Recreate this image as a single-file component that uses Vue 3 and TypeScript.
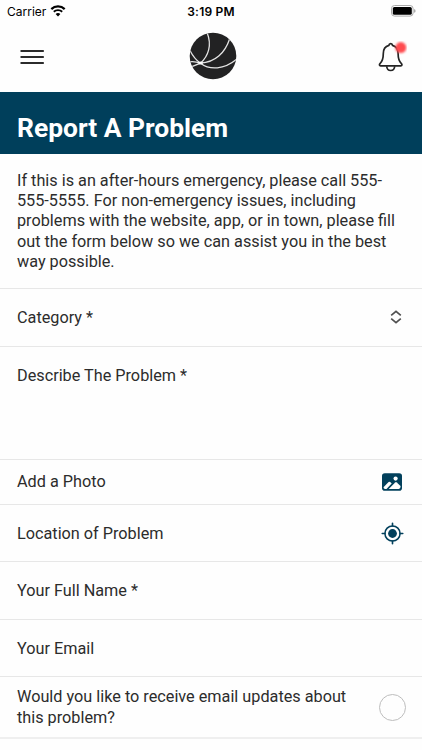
<script setup lang="ts">
interface Field {
  id: string
  label: string
  icon?: 'select' | 'photo' | 'locate' | 'radio'
}

const fields: Field[] = [
  { id: 'category', label: 'Category *', icon: 'select' },
  { id: 'description', label: 'Describe The Problem *' },
  { id: 'photo', label: 'Add a Photo', icon: 'photo' },
  { id: 'location', label: 'Location of Problem', icon: 'locate' },
  { id: 'name', label: 'Your Full Name *' },
  { id: 'email', label: 'Your Email' },
  { id: 'updates', label: 'Would you like to receive email updates about this problem?', icon: 'radio' },
]
</script>

<template>
  <div class="screen">
    <div class="status">
      <div class="carrier">
        <span>Carrier</span>
        <svg width="16" height="12" viewBox="0 0 16 12">
          <path d="M1.3 4.1a9.7 9.7 0 0 1 13.4 0" fill="none" stroke="#000" stroke-width="2.2" />
          <path d="M3.8 6.8a6 6 0 0 1 8.4 0" fill="none" stroke="#000" stroke-width="1.9" />
          <path d="M8 11.6 5.6 9.1a3.4 3.4 0 0 1 4.8 0z" />
        </svg>
      </div>
      <div class="clock">3:19 PM</div>
      <div class="battery">
        <svg width="25" height="12" viewBox="0 0 25 12">
          <rect x=".5" y=".5" width="21.6" height="10.6" rx="3" fill="none" stroke="#aaa" />
          <rect x="1.8" y="1.9" width="19" height="7.9" rx="1.6" />
          <path d="M23.2 4v3.8q1.3-.5 1.3-1.9T23.2 4z" fill="#999" />
        </svg>
      </div>
    </div>

    <header class="bar">
      <svg class="menu" width="24" height="16" viewBox="0 0 24 16">
        <path d="M1.2 2h22M1.2 8h22M1.2 14h22" stroke="#2b2b2b" stroke-width="1.8" stroke-linecap="round" />
      </svg>
      <svg class="logo" width="48" height="48" viewBox="0 0 48 48">
        <defs>
          <clipPath id="disc"><circle cx="24" cy="24" r="23.3" /></clipPath>
        </defs>
        <circle cx="24" cy="24" r="23.3" fill="#222223" />
        <g clip-path="url(#disc)" fill="none" stroke="#e4e4e4" stroke-width="1.3">
          <path d="M18.2 1.1C23 13 19.5 24 11.5 31.2" />
          <path d="M40.6 7C36 21 26 30.5 11.5 31.2" />
          <path d="M47.3 27.5C35 37.5 21 38.5 11.5 31.2" />
          <path d="M1 18.5C4 24.5 7.5 28.5 11.5 31.2" />
          <path d="M0 29.8Q6 29 11.5 31.2Q7 33 2.8 34.7" />
        </g>
        <ellipse cx="11.6" cy="31" rx="2.4" ry="1.5" fill="#fff" />
      </svg>
      <svg class="bell" width="30" height="32" viewBox="0 0 30 32">
        <defs>
          <filter id="glow" x="-40%" y="-40%" width="180%" height="180%"><feGaussianBlur stdDeviation=".8" /></filter>
        </defs>
        <g fill="none" stroke="#242424" stroke-width="1.7" stroke-linejoin="round">
          <path d="M13.7 2.6c-1.1 0-1.7.7-1.8 1.8C8 5.5 6.3 8.5 6.3 12.5c0 5.7-1.2 8.2-3.3 10.1-.9.9-.7 2.2.6 2.2h20.2c1.3 0 1.5-1.3.6-2.2-2.1-1.9-3.3-4.4-3.3-10.1 0-4-1.7-7-5.6-8.1-.1-1.1-.7-1.8-1.8-1.8z" />
          <path d="M9.7 25.2c.2 2.7 1.7 4.3 4 4.3s3.8-1.6 4-4.3" />
        </g>
        <circle cx="23.8" cy="6.6" r="5.5" fill="#ff4b50" filter="url(#glow)" />
      </svg>
    </header>

    <h1 class="title">Report A Problem</h1>

    <main>
      <p class="intro">
        If this is an after-hours emergency, please call 555-555-5555. For non-emergency issues,
        including problems with the website, app, or in town, please fill out the form below so we
        can assist you in the best way possible.
      </p>

      <div v-for="field in fields" :key="field.id" class="row" :class="field.id">
        <span class="label">{{ field.label }}</span>
        <svg v-if="field.icon === 'select'" class="ic-select" width="12" height="14" viewBox="0 0 12 14">
          <path d="M1.2 5.3 6 1.3l4.8 4M1.2 8.7l4.8 4 4.8-4" fill="none" stroke="#505050" stroke-width="1.7" />
        </svg>
        <svg v-else-if="field.icon === 'photo'" class="ic-photo" width="20" height="18" viewBox="0 0 20 18">
          <rect width="20" height="17.4" y=".3" rx="2.8" fill="#02405c" />
          <circle cx="13.6" cy="5.6" r="2.1" fill="#fff" />
          <path d="M1.5 14.2 6.6 9.1q.8-.7 1.6 0l1.5 1.4-5.2 5.4H3q-1.3 0-1.5-1.7z" fill="#fff" />
          <path d="M6.7 15.9 13.2 9.4q.8-.7 1.6 0l3.7 3.6v1.1q0 1.8-1.8 1.8z" fill="#fff" />
        </svg>
        <svg v-else-if="field.icon === 'locate'" class="ic-locate" width="23" height="23" viewBox="0 0 24 24">
          <circle cx="12" cy="12" r="7.9" fill="none" stroke="#02405c" stroke-width="1.6" />
          <circle cx="12" cy="12" r="4.6" fill="#02405c" />
          <path d="M12 1.3v2.8M12 19.9v2.8M1.3 12h2.8M19.9 12h2.8" stroke="#02405c" stroke-width="1.7" stroke-linecap="round" />
        </svg>
        <span v-else-if="field.icon === 'radio'" class="radio"></span>
      </div>
    </main>
  </div>
</template>

<style>
body {
  background: #fefefe;
}
</style>

<style scoped>
.screen {
  width: 422px;
  height: 750px;
  overflow: hidden;
  background: #fefefe;
  color: #2c2c2c;
  font-family: Roboto, "Liberation Sans", sans-serif;
}
.status {
  display: grid;
  grid-template-columns: 1fr auto 1fr;
  height: 22px;
  align-items: center;
  color: #000;
  font-family: Inter, "Liberation Sans", sans-serif;
}
.carrier {
  display: flex;
  align-items: center;
  gap: 4px;
  padding-left: 7px;
  font-size: 12px;
}
.carrier svg {
  margin-top: -1px;
}
.clock {
  font-size: 12px;
  font-weight: 600;
  letter-spacing: 0.2px;
}
.battery {
  display: flex;
  justify-content: flex-end;
  padding-right: 6px;
  margin-top: -1px;
}
.bar {
  display: grid;
  grid-template-columns: 1fr auto 1fr;
  align-items: center;
  height: 70px;
  padding: 0 15px 0 20px;
  box-sizing: border-box;
}
.logo {
  margin: -2px 0 0 -2px;
}
.bell {
  justify-self: end;
  margin-top: -1px;
}
.title {
  height: 62px;
  margin: 0;
  padding: 5px 17px 0;
  box-sizing: border-box;
  background: #003f5b;
  color: #fff;
  font-size: 26.4px;
  font-weight: 700;
  line-height: 62px;
}
.intro {
  height: 135px;
  margin: 0;
  padding: 16.5px 20px 0 17px;
  box-sizing: border-box;
  border-bottom: 1px solid #e7e7e7;
  font-size: 16.24px;
  line-height: 20.4px;
}
.row {
  display: flex;
  align-items: center;
  justify-content: space-between;
  height: 57.3px;
  padding: 0 17px;
  box-sizing: border-box;
  border-bottom: 1px solid #e7e7e7;
  font-size: 16.24px;
  line-height: 20.4px;
}
.label {
  padding-top: 2px;
}
.category {
  height: 58px;
}
.description {
  height: 113px;
  align-items: flex-start;
  padding-top: 17px;
}
.photo {
  height: 45px;
}
.photo .label {
  padding-top: 1px;
}
.updates {
  height: 62px;
  border-bottom: 2px solid #efefef;
}
.updates .label {
  width: 345px;
}
.ic-select {
  margin: -2px 3px 0 0;
}
.ic-photo {
  margin-right: 3px;
}
.ic-locate {
  margin-right: 1px;
}
.radio {
  width: 27px;
  height: 27px;
  margin: 1px -1px 0 0;
  box-sizing: border-box;
  border: 1px solid #bdbdbd;
  border-radius: 50%;
}
</style>
